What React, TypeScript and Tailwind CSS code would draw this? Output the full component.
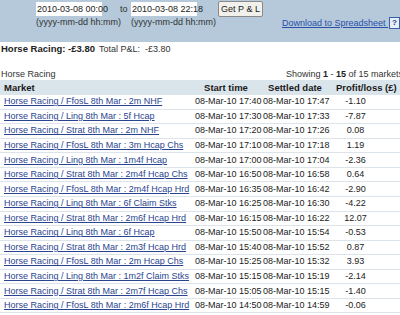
import React from 'react';

const ROWS = [
  { market: 'Horse Racing / FfosL 8th Mar : 2m NHF',          start: '08-Mar-10 17:40', settled: '08-Mar-10 17:47', pl: '-1.10' },
  { market: 'Horse Racing / Ling 8th Mar : 5f Hcap',          start: '08-Mar-10 17:30', settled: '08-Mar-10 17:33', pl: '-7.87' },
  { market: 'Horse Racing / Strat 8th Mar : 2m NHF',          start: '08-Mar-10 17:20', settled: '08-Mar-10 17:26', pl: '0.08' },
  { market: 'Horse Racing / FfosL 8th Mar : 3m Hcap Chs',     start: '08-Mar-10 17:10', settled: '08-Mar-10 17:18', pl: '1.19' },
  { market: 'Horse Racing / Ling 8th Mar : 1m4f Hcap',        start: '08-Mar-10 17:00', settled: '08-Mar-10 17:04', pl: '-2.36' },
  { market: 'Horse Racing / Strat 8th Mar : 2m4f Hcap Chs',   start: '08-Mar-10 16:50', settled: '08-Mar-10 16:58', pl: '0.64' },
  { market: 'Horse Racing / FfosL 8th Mar : 2m4f Hcap Hrd',   start: '08-Mar-10 16:35', settled: '08-Mar-10 16:42', pl: '-2.90' },
  { market: 'Horse Racing / Ling 8th Mar : 6f Claim Stks',    start: '08-Mar-10 16:25', settled: '08-Mar-10 16:30', pl: '-4.22' },
  { market: 'Horse Racing / Strat 8th Mar : 2m6f Hcap Hrd',   start: '08-Mar-10 16:15', settled: '08-Mar-10 16:22', pl: '12.07' },
  { market: 'Horse Racing / Ling 8th Mar : 6f Hcap',          start: '08-Mar-10 15:50', settled: '08-Mar-10 15:54', pl: '-0.53' },
  { market: 'Horse Racing / Strat 8th Mar : 2m3f Hcap Hrd',   start: '08-Mar-10 15:40', settled: '08-Mar-10 15:52', pl: '0.87' },
  { market: 'Horse Racing / FfosL 8th Mar : 2m Hcap Chs',     start: '08-Mar-10 15:25', settled: '08-Mar-10 15:32', pl: '3.93' },
  { market: 'Horse Racing / Ling 8th Mar : 1m2f Claim Stks',  start: '08-Mar-10 15:15', settled: '08-Mar-10 15:19', pl: '-2.14' },
  { market: 'Horse Racing / Strat 8th Mar : 2m7f Hcap Chs',   start: '08-Mar-10 15:05', settled: '08-Mar-10 15:15', pl: '-1.40' },
  { market: 'Horse Racing / FfosL 8th Mar : 2m6f Hcap Hrd',   start: '08-Mar-10 14:50', settled: '08-Mar-10 14:59', pl: '-0.06' },
];

export default function App() {
  return (
    <div className="w-[400px] h-[315px] overflow-hidden bg-white text-[9px] leading-none whitespace-nowrap text-[#222] font-['Liberation_Sans',Arial,sans-serif]">
      <div className="w-[408px]">
        {/* Date range bar */}
        <div className="h-[42px] bg-[#b5c9da] pl-[36px] pt-[2px] flex items-start">
          <div className="w-[84px]">
            <div className="w-[66px] h-[14px] bg-white flex items-center pl-[1px]">2010-03-08 00:00</div>
            <div className="mt-[2px] text-[#333]">(yyyy-mm-dd hh:mm)</div>
          </div>
          <div className="w-[11px] pt-[3px] text-[#333]">to</div>
          <div className="w-[87px]">
            <div className="w-[66px] h-[14px] bg-white flex items-center pl-[1px]">2010-03-08 22:18</div>
            <div className="mt-[2px] text-[#333]">(yyyy-mm-dd hh:mm)</div>
          </div>
          <button className="-mt-[1px] w-[45px] h-[16px] border border-[#8a8a8a] rounded-[2px] bg-[#f1f0ea] text-[#222] text-[9px] leading-none whitespace-nowrap">
            Get P &amp; L
          </button>
          <div className="ml-[19px] mt-[15px] flex items-center">
            <a className="text-[#2a4fa8] underline w-[104px]">Download to Spreadsheet&nbsp;</a>
            <span className="ml-[3px] w-[11px] h-[12px] border border-[#3a5fa8] bg-[#e8eef5] text-[#1d3f8a] font-bold text-[8px] flex items-center justify-center">?</span>
          </div>
        </div>

        {/* Summary */}
        <div className="mt-[1px] h-[12px] flex items-center pl-[1px]">
          <span className="font-bold text-[9.5px]">Horse Racing: -£3.80</span>
          <span className="ml-[4px] text-[#333]">Total P&amp;L:&nbsp; -£3.80</span>
        </div>

        {/* Table heading */}
        <div className="mt-[14px] h-[10px] flex items-center justify-between pl-[1px] pr-[5px] text-[#333]">
          <span>Horse Racing</span>
          <span>Showing <b className="text-[#222]">1</b> - <b className="text-[#222]">15</b> of 15 markets</span>
        </div>

        <div className="mt-[1px] h-[15px] bg-[#dae4eb] grid grid-cols-[192px_68px_70px_78px] items-center font-bold text-[#1a1a1a] text-[9.5px]">
          <span className="pl-[4px]">Market</span>
          <span className="text-center">Start time</span>
          <span className="text-center">Settled date</span>
          <span className="text-left pl-[6px]">Profit/loss (£)</span>
        </div>

        {ROWS.map(r => (
          <div key={r.market} className="h-[14.57px] border-b border-[#dde4e9] grid grid-cols-[192px_68px_70px_78px] items-center">
            <a className="pl-[4px] text-[#2a4490] underline">{r.market}</a>
            <span className="pl-[3px]">{r.start}</span>
            <span className="pl-[3px]">{r.settled}</span>
            <span className="w-[51px] text-center">{r.pl}</span>
          </div>
        ))}
      </div>
    </div>
  );
}
